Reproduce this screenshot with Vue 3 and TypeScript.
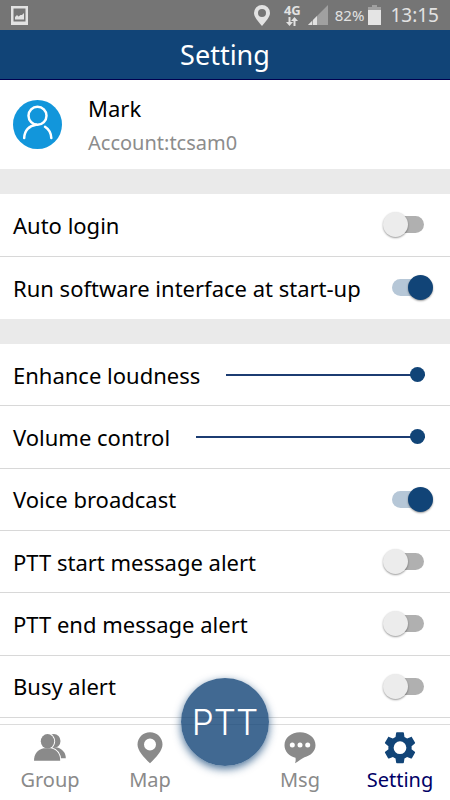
<script setup lang="ts">
import { reactive, ref } from 'vue'

interface Toggle {
  id: string
  label: string
  on: boolean
}

interface Level {
  id: string
  label: string
  value: number
}

const startup = reactive<Toggle[]>([
  { id: 'auto-login', label: 'Auto login', on: false },
  { id: 'run-at-startup', label: 'Run software interface at start-up', on: true },
])

const levels = reactive<Level[]>([
  { id: 'loudness', label: 'Enhance loudness', value: 100 },
  { id: 'volume', label: 'Volume control', value: 100 },
])

const alerts = reactive<Toggle[]>([
  { id: 'voice-broadcast', label: 'Voice broadcast', on: true },
  { id: 'ptt-start', label: 'PTT start message alert', on: false },
  { id: 'ptt-end', label: 'PTT end message alert', on: false },
  { id: 'busy', label: 'Busy alert', on: false },
])

const activeTab = ref('Setting')
</script>

<template>
  <div class="screen">
    <div class="status">
      <svg class="picture" viewBox="0 0 17 19" aria-hidden="true">
        <path fill="#e2e2e2" fill-rule="evenodd" d="M0 0h17v19H0zM2.500 2.500v13h12v-13z" />
        <path fill="#e2e2e2" d="M4 13.500V11l2-2 1.500 1.500 2-1.500 1.500 0 2-2v6.500z" />
      </svg>
      <div class="indicators">
        <svg class="location" viewBox="0 0 16 21" aria-hidden="true">
          <path fill="#e2e2e2" fill-rule="evenodd" d="M8 0a8 8 0 0 1 8 8c0 4-4 8-8 13C4 16 0 12 0 8a8 8 0 0 1 8-8zm0 4a4 4 0 1 0 0 8 4 4 0 0 0 0-8z" />
        </svg>
        <div class="network">
          <span>4G</span>
          <svg viewBox="0 0 12 9" aria-hidden="true">
            <path fill="#e2e2e2" d="M2.500 0h2v5H7L3.500 9 0 5h2.500zM7.500 9h2V4H12L8.500 0 5 4h2.500z" />
          </svg>
        </div>
        <svg class="signal" viewBox="0 0 20 20" aria-hidden="true">
          <path fill="#a0a0a0" d="M20 0v20H0z" />
          <path fill="#e2e2e2" d="M4 16v4H0zM9 11v9H5v-5z" />
        </svg>
        <span class="percent">82%</span>
        <svg class="battery" viewBox="0 0 13 20" aria-hidden="true">
          <path fill="#a0a0a0" d="M4 0h5v2h4v3H0V2h4z" />
          <path fill="#e4e4e4" d="M0 5h13v15H0z" />
        </svg>
        <span class="clock">13:15</span>
      </div>
    </div>

    <header class="title"><h1>Setting</h1></header>

    <main>
      <section class="profile">
        <svg class="avatar" viewBox="0 0 49 49" aria-hidden="true">
          <circle cx="24.500" cy="24.500" r="24.500" fill="#1296db" />
          <g fill="none" stroke="#fff" stroke-width="2.500" stroke-linecap="round">
            <circle cx="24.500" cy="15.800" r="9" />
            <path d="M11.200 38c.2-7.500 5-12.500 12-13.300M32 26.800c4 2.500 6 6 6.300 11.200" />
          </g>
        </svg>
        <div class="identity">
          <h2>Mark</h2>
          <p>Account:tcsam0</p>
        </div>
      </section>

      <section class="group">
        <div v-for="item in startup" :key="item.id" class="row">
          <label :for="item.id">{{ item.label }}</label>
          <input :id="item.id" v-model="item.on" class="switch" type="checkbox" role="switch" />
        </div>
      </section>

      <section class="group">
        <div v-for="item in levels" :key="item.id" class="row">
          <label :for="item.id">{{ item.label }}</label>
          <input :id="item.id" v-model.number="item.value" class="slider" type="range" min="0" max="100" />
        </div>
        <div v-for="item in alerts" :key="item.id" class="row">
          <label :for="item.id">{{ item.label }}</label>
          <input :id="item.id" v-model="item.on" class="switch" type="checkbox" role="switch" />
        </div>
      </section>
    </main>

    <nav class="tabs">
      <button type="button" :class="{ active: activeTab === 'Group' }" @click="activeTab = 'Group'">
        <svg viewBox="0 0 32 32" aria-hidden="true">
          <g fill="currentColor">
            <ellipse cx="19.800" cy="9" rx="6.700" ry="7" />
            <path d="M18 15.500h5.500c5.500 2 8.300 5.500 8.300 10.800H20z" />
          </g>
          <g fill="currentColor" stroke="#fff" stroke-width="2">
            <ellipse cx="13.500" cy="9.300" rx="6.700" ry="7.300" />
            <path d="M0 28.700c0-6.200 3-10.700 9.500-12.400h7.500c6.500 1.700 9.200 6.200 9.200 12.400z" />
          </g>
          <g fill="currentColor">
            <ellipse cx="13.500" cy="9.300" rx="6.700" ry="7.300" />
            <path d="M0 28.700c0-6.200 3-10.700 9.500-12.400h7.500c6.500 1.700 9.200 6.200 9.200 12.400z" />
          </g>
        </svg>
        <span>Group</span>
      </button>
      <button type="button" :class="{ active: activeTab === 'Map' }" @click="activeTab = 'Map'">
        <svg viewBox="0 0 32 32" aria-hidden="true">
          <path fill="currentColor" fill-rule="evenodd" d="M16 .2c7 0 12.500 5.500 12.500 12.300 0 6-6 12.500-12.500 18.800C9.500 25 3.500 18.500 3.500 12.500 3.500 5.700 9 .2 16 .2zm0 6.200a6 6 0 1 0 0 12 6 6 0 0 0 0-12z" />
        </svg>
        <span>Map</span>
      </button>
      <div class="talk-slot">
        <button type="button" class="talk">PTT</button>
      </div>
      <button type="button" :class="{ active: activeTab === 'Msg' }" @click="activeTab = 'Msg'">
        <svg viewBox="0 0 32 32" aria-hidden="true">
          <path fill="currentColor" d="M16 .2c8.800 0 15.500 5.500 15.500 13 0 6-5 10.500-11 12-3 1.500-6 4-9.500 6 .8-2 .8-3.500.5-5.500C5 24.200.5 19.200.5 13.200.5 5.700 7.200.2 16 .2z" />
          <g fill="#fff">
            <circle cx="8.300" cy="12.900" r="2.500" />
            <circle cx="16" cy="12.900" r="2.500" />
            <circle cx="23.700" cy="12.900" r="2.500" />
          </g>
        </svg>
        <span>Msg</span>
      </button>
      <button type="button" :class="{ active: activeTab === 'Setting' }" @click="activeTab = 'Setting'">
        <svg viewBox="1.700 1.900 20.600 20.600" aria-hidden="true">
          <path fill="#114477" fill-rule="evenodd" d="M19.430 12.980c.04-.32.07-.64.07-.98s-.03-.66-.07-.98l2.110-1.650c.19-.15.24-.42.12-.64l-2-3.460c-.12-.22-.39-.3-.61-.22l-2.490 1c-.52-.4-1.080-.73-1.690-.98l-.38-2.650C14.460 2.180 14.250 2 14 2h-4c-.25 0-.46.18-.49.42l-.38 2.650c-.61.25-1.170.59-1.690.98l-2.490-1c-.23-.09-.49 0-.61.22l-2 3.460c-.13.22-.07.49.12.64l2.110 1.650c-.04.32-.07.65-.07.98s.03.66.07.98l-2.110 1.650c-.19.15-.24.42-.12.64l2 3.460c.12.22.39.3.61.22l2.490-1c.52.4 1.080.73 1.690.98l.38 2.650c.03.24.24.42.49.42h4c.25 0 .46-.18.49-.42l.38-2.650c.61-.25 1.170-.59 1.690-.98l2.490 1c.23.09.49 0 .61-.22l2-3.460c.12-.22.07-.49-.12-.64zM12 7.900a4.100 4.100 0 1 0 0 8.200 4.100 4.100 0 0 0 0-8.200z" />
        </svg>
        <span>Setting</span>
      </button>
    </nav>
  </div>
</template>

<style>
body {
  margin: 0;
  background: #fff;
}
</style>

<style scoped>
* {
  box-sizing: border-box;
}

.screen {
  display: flex;
  flex-direction: column;
  min-height: 100vh;
  background: #fff;
  color: #000;
  font-family: "Noto Sans", "Open Sans", sans-serif;
  font-size: 22px;
}

h1,
h2,
p {
  margin: 0;
  font-weight: 400;
}

svg {
  display: block;
  flex: none;
}

.status {
  display: flex;
  align-items: center;
  justify-content: space-between;
  height: 30px;
  padding: 0 11px;
  background: #757575;
  color: #e2e2e2;
}

.picture {
  width: 17px;
  height: 19px;
}

.indicators {
  display: flex;
  align-items: center;
  gap: 7px;
}

.location {
  width: 16px;
  height: 21px;
  margin-right: 7px;
}

.network {
  display: flex;
  flex-direction: column;
  align-items: center;
  gap: 2px;
  font-size: 13px;
  font-weight: 700;
  line-height: 10px;
}

.network svg {
  width: 12px;
  height: 9px;
}

.signal {
  width: 20px;
  height: 20px;
}

.percent {
  font-size: 15px;
}

.battery {
  width: 13px;
  height: 20px;
  margin: 0 2px 0 -3px;
}

.clock {
  font-size: 19px;
  line-height: 30px;
}

.title {
  display: flex;
  align-items: center;
  justify-content: center;
  height: 50px;
  border-bottom: 1px solid #000050;
  background: #114477;
  color: #fff;
}

.title h1 {
  font-size: 27px;
  line-height: 36px;
}

main {
  flex: 1;
}

.profile {
  display: flex;
  align-items: center;
  gap: 26px;
  min-height: 89px;
  padding: 0 13px;
}

.avatar {
  width: 49px;
  height: 49px;
}

.identity h2 {
  font-size: 22px;
  line-height: 36px;
}

.identity p {
  color: #8c8c8c;
  font-size: 20px;
  line-height: 34px;
}

.group {
  display: grid;
  grid-auto-rows: 1fr;
  min-height: 150px;
  border-top: 25px solid #eaeaea;
}

.group:last-child {
  min-height: 399px;
}

.row {
  display: flex;
  align-items: center;
  gap: 26px;
  padding: 0 17px 0 13px;
  border-bottom: 1px solid #d8d8d8;
}

.group:not(:last-child) .row:last-child {
  border-bottom: 0;
}

.row label {
  flex: none;
  line-height: 30px;
}

.switch {
  position: relative;
  appearance: none;
  flex: none;
  width: 41px;
  height: 25px;
  margin: 0 9px 0 auto;
  cursor: pointer;
}

.switch::before,
.switch::after {
  content: "";
  position: absolute;
}

.switch::before {
  top: 4px;
  right: 0;
  width: 32px;
  height: 17px;
  border-radius: 9px;
  background: #b0b0b0;
}

.switch::after {
  top: 0;
  left: 0;
  width: 25px;
  height: 25px;
  border-radius: 50%;
  background: #ececec;
  box-shadow: 0 1px 2px rgba(0, 0, 0, 0.4);
}

.switch:checked {
  margin-right: 0;
}

.switch:checked::before {
  right: auto;
  left: 0;
  background: #b6c7d7;
}

.switch:checked::after {
  right: 0;
  left: auto;
  background: #114477;
}

.slider {
  appearance: none;
  flex: 1;
  min-width: 0;
  height: 16px;
  margin: 0 8px 0 0;
  background: linear-gradient(#1c3c72, #1c3c72) center / 100% 2px no-repeat;
  cursor: pointer;
}

.slider::-webkit-slider-thumb {
  appearance: none;
  width: 15px;
  height: 15px;
  border-radius: 50%;
  background: #114477;
}

.tabs {
  position: sticky;
  bottom: 0;
  display: grid;
  grid-template-columns: 2fr 2fr 1fr 2fr 2fr;
  height: 76px;
  border-top: 1px solid #dcdcdc;
  background: #fff;
}

.tabs button {
  display: flex;
  flex-direction: column;
  align-items: center;
  padding: 7px 0 0;
  border: 0;
  background: none;
  color: #8a8a8a;
  font: inherit;
  font-size: 20px;
  line-height: 32px;
  cursor: pointer;
}

.tabs button.active {
  color: #000066;
}

.tabs svg {
  width: 32px;
  height: 32px;
}

.talk-slot {
  position: relative;
}

.tabs .talk {
  position: absolute;
  top: -47px;
  left: 50%;
  justify-content: center;
  width: 88px;
  height: 88px;
  margin-left: -44px;
  padding: 0;
  border-radius: 50%;
  background: rgba(17, 68, 119, 0.8);
  box-shadow: 0 3px 8px rgba(17, 68, 119, 0.75);
  color: #fff;
  font-family: Inter, Roboto, sans-serif;
  font-size: 35px;
  font-weight: 300;
}
</style>
